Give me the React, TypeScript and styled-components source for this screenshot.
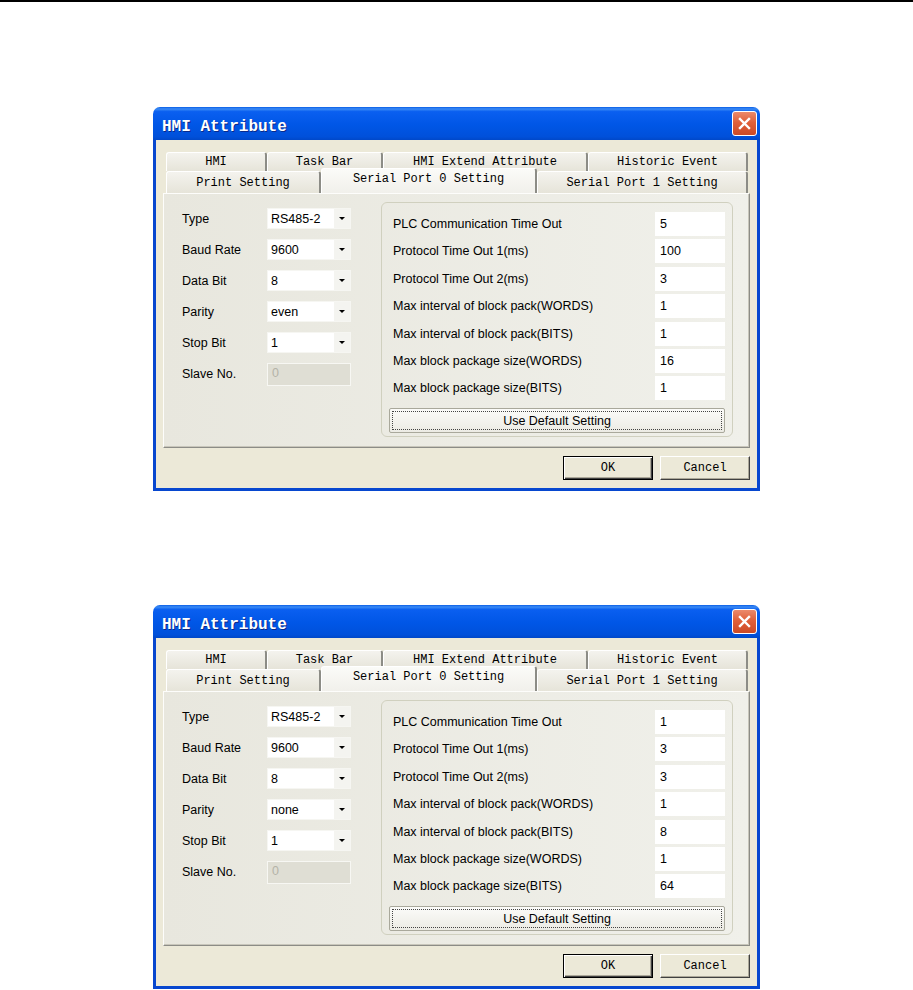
import React from 'react';
import styled, { createGlobalStyle } from 'styled-components';

const GlobalStyle = createGlobalStyle`
  html, body {
    margin: 0;
    padding: 0;
    background: #ffffff;
  }
  body {
    width: 913px;
    height: 990px;
    overflow: hidden;
  }
`;

interface DialogData {
  parity: string;
  timeouts: string[];
}

const dialogs: DialogData[] = [
  { parity: 'even', timeouts: ['5', '100', '3', '1', '1', '16', '1'] },
  { parity: 'none', timeouts: ['1', '3', '3', '1', '8', '1', '64'] },
];

const timeoutLabels = [
  'PLC Communication Time Out',
  'Protocol Time Out 1(ms)',
  'Protocol Time Out 2(ms)',
  'Max interval of block pack(WORDS)',
  'Max interval of block pack(BITS)',
  'Max block package size(WORDS)',
  'Max block package size(BITS)',
];

const backTabs = [
  { label: 'HMI', width: 101 },
  { label: 'Task Bar', width: 116 },
  { label: 'HMI Extend Attribute', width: 205 },
  { label: 'Historic Event', width: 160 },
];

const frontTabs = [
  { label: 'Print Setting', width: 155, selected: false },
  { label: 'Serial Port 0 Setting', width: 216, selected: true },
  { label: 'Serial Port 1 Setting', width: 211, selected: false },
];

const Page = styled.div`
  border-top: 2px solid #000;
  display: flex;
  flex-direction: column;
  align-items: flex-start;
  gap: 114px;
  padding: 105px 0 0 153px;
`;

const Window = styled.div`
  width: 607px;
  display: flex;
  flex-direction: column;
  border-radius: 7px 7px 0 0;
  overflow: hidden;
`;

const TitleBar = styled.div`
  height: 33px;
  display: flex;
  align-items: center;
  justify-content: space-between;
  padding: 0 3px 0 9px;
  box-sizing: border-box;
  background: linear-gradient(
    to bottom,
    #0a5ee6 0%,
    #3b8bf5 6%,
    #0a5ff0 14%,
    #0056e6 55%,
    #0050da 90%,
    #0048c8 100%
  );
`;

const Title = styled.span`
  font-family: 'Liberation Mono', 'DejaVu Sans Mono', monospace;
  font-size: 16px;
  font-weight: 700;
  color: #ffffff;
  padding-top: 6px;
  text-shadow: 1px 1px 0 #0a2a8a;
`;

const CloseButton = styled.div`
  width: 23px;
  height: 23px;
  border: 1px solid #ffffff;
  border-radius: 3px;
  display: flex;
  align-items: center;
  justify-content: center;
  background: linear-gradient(to bottom, #eb8a6c 0%, #e0603a 45%, #cc4a26 100%);
`;

const Frame = styled.div`
  background: #ece9d8;
  border: 3px solid #0747cf;
  border-top: none;
  padding: 12px 7px 8px 7px;
  display: flex;
  flex-direction: column;
`;

const TabRow = styled.div<{ $height: number }>`
  display: flex;
  height: ${(p) => p.$height}px;
  margin: 0 2px 0 3px;
  align-items: flex-end;
`;

const Tab = styled.div<{ $width: number; $selected?: boolean }>`
  width: ${(p) => p.$width}px;
  height: ${(p) => (p.$selected ? 'calc(100% + 3px)' : '100%')};
  box-sizing: border-box;
  display: flex;
  align-items: center;
  justify-content: center;
  font-family: 'Liberation Mono', 'DejaVu Sans Mono', monospace;
  font-size: 12px;
  color: #000;
  border-top: 1px solid #ffffff;
  border-left: 1px solid #ffffff;
  border-right: 2px solid #8c8c86;
  border-radius: 3px 3px 0 0;
  background: ${(p) =>
    p.$selected
      ? 'linear-gradient(to bottom, #fbfbf8, #f1f0eb)'
      : 'linear-gradient(to bottom, #f4f3ee, #e6e4d9)'};
  padding-bottom: ${(p) => (p.$selected ? '4px' : '0')};
  position: relative;
  z-index: ${(p) => (p.$selected ? 2 : 1)};
`;

const Panel = styled.div`
  height: 255px;
  box-sizing: border-box;
  border: 1px solid;
  border-color: #fdfdfb #8c8c86 #8c8c86 #fdfdfb;
  box-shadow: inset -1px -1px 0 #c8c6bb;
  background: linear-gradient(to right, #e8e7de, #f0f0ea);
  display: flex;
  padding: 8px 0 0 18px;
  position: relative;
  z-index: 1;
`;

const SettingsColumn = styled.div`
  width: 199px;
  padding-top: 6px;
  display: grid;
  grid-template-columns: 85px 84px;
  grid-auto-rows: 21px;
  row-gap: 10px;
  align-content: start;
  align-items: center;
`;

const Label = styled.span`
  font-family: 'Liberation Sans', Arial, sans-serif;
  font-size: 12.5px;
  color: #000;
  white-space: nowrap;
`;

const Combo = styled.div`
  height: 21px;
  box-sizing: border-box;
  border: 1px solid #f6f6f2;
  background: #ffffff;
  display: flex;
  align-items: stretch;
`;

const ComboText = styled.span`
  flex: 1;
  display: flex;
  align-items: center;
  padding-left: 3px;
  font-family: 'Liberation Sans', Arial, sans-serif;
  font-size: 12.5px;
  color: #000;
`;

const ComboArrow = styled.span`
  width: 16px;
  display: flex;
  align-items: center;
  justify-content: center;
  background: #f4f4f0;
  &::after {
    content: '';
    border-left: 3px solid transparent;
    border-right: 3px solid transparent;
    border-top: 3px solid #000;
  }
`;

const DisabledInput = styled.div`
  height: 23px;
  box-sizing: border-box;
  border: 1px solid #f7f7f3;
  background: #dfded4;
  padding: 2px 0 0 4px;
  font-family: 'Liberation Sans', Arial, sans-serif;
  font-size: 12.5px;
  color: #b4b3a8;
  align-self: start;
`;

const GroupBox = styled.div`
  width: 352px;
  height: 235px;
  box-sizing: border-box;
  border: 1px solid #d0d0bf;
  border-radius: 6px;
  padding: 9px 7px 0 7px;
  display: flex;
  flex-direction: column;
`;

const TimeoutGrid = styled.div`
  display: grid;
  grid-template-columns: 1fr 70px;
  grid-auto-rows: 24px;
  row-gap: 3.4px;
`;

const TimeoutLabel = styled(Label)`
  display: flex;
  align-items: center;
  padding-left: 4px;
`;

const ValueField = styled.div`
  background: #ffffff;
  display: flex;
  align-items: center;
  padding-left: 5px;
  font-family: 'Liberation Sans', Arial, sans-serif;
  font-size: 12.5px;
  color: #000;
`;

const DefaultButton = styled.div`
  margin-top: 8px;
  height: 25px;
  box-sizing: border-box;
  border: 1px solid #a9a89b;
  border-radius: 2px;
  background: linear-gradient(to bottom, #fbfbf9, #ecebe4);
  display: flex;
  align-items: center;
  justify-content: center;
  font-family: 'Liberation Sans', Arial, sans-serif;
  font-size: 12.5px;
  color: #000;
  outline: 1px dotted #444;
  outline-offset: -4px;
`;

const Footer = styled.div`
  display: flex;
  justify-content: flex-end;
  gap: 7px;
  margin-top: 8px;
`;

const DialogButton = styled.div<{ $default?: boolean }>`
  width: 90px;
  height: 24px;
  box-sizing: border-box;
  display: flex;
  align-items: center;
  justify-content: center;
  font-family: 'Liberation Mono', 'DejaVu Sans Mono', monospace;
  font-size: 12px;
  color: #000;
  background: #ece9d8;
  border: 1px solid;
  border-color: ${(p) => (p.$default ? '#000' : '#ffffff #404040 #404040 #ffffff')};
  box-shadow: ${(p) =>
    p.$default
      ? 'inset 1px 1px 0 #ffffff, inset -1px -1px 0 #404040, inset -2px -2px 0 #aca899'
      : 'inset -1px -1px 0 #aca899'};
`;

const CloseIcon = () => (
  <svg width="13" height="13" viewBox="0 0 13 13">
    <path d="M2 2 L11 11 M11 2 L2 11" stroke="#fff" strokeWidth="2.4" strokeLinecap="square" />
  </svg>
);

const Dialog: React.FC<{ data: DialogData }> = ({ data }) => {
  const settings = [
    { label: 'Type', value: 'RS485-2' },
    { label: 'Baud Rate', value: '9600' },
    { label: 'Data Bit', value: '8' },
    { label: 'Parity', value: data.parity },
    { label: 'Stop Bit', value: '1' },
  ];
  return (
    <Window>
      <TitleBar>
        <Title>HMI Attribute</Title>
        <CloseButton>
          <CloseIcon />
        </CloseButton>
      </TitleBar>
      <Frame>
        <TabRow $height={19}>
          {backTabs.map((t) => (
            <Tab key={t.label} $width={t.width}>
              {t.label}
            </Tab>
          ))}
        </TabRow>
        <TabRow $height={22}>
          {frontTabs.map((t) => (
            <Tab key={t.label} $width={t.width} $selected={t.selected}>
              {t.label}
            </Tab>
          ))}
        </TabRow>
        <Panel>
          <SettingsColumn>
            {settings.map((s) => (
              <React.Fragment key={s.label}>
                <Label>{s.label}</Label>
                <Combo>
                  <ComboText>{s.value}</ComboText>
                  <ComboArrow />
                </Combo>
              </React.Fragment>
            ))}
            <Label>Slave No.</Label>
            <DisabledInput>0</DisabledInput>
          </SettingsColumn>
          <GroupBox>
            <TimeoutGrid>
              {timeoutLabels.map((label, i) => (
                <React.Fragment key={label}>
                  <TimeoutLabel>{label}</TimeoutLabel>
                  <ValueField>{data.timeouts[i]}</ValueField>
                </React.Fragment>
              ))}
            </TimeoutGrid>
            <DefaultButton>Use Default Setting</DefaultButton>
          </GroupBox>
        </Panel>
        <Footer>
          <DialogButton $default>OK</DialogButton>
          <DialogButton>Cancel</DialogButton>
        </Footer>
      </Frame>
    </Window>
  );
};

export default function App() {
  return (
    <>
      <GlobalStyle />
      <Page>
        {dialogs.map((d, i) => (
          <Dialog key={i} data={d} />
        ))}
      </Page>
    </>
  );
}
